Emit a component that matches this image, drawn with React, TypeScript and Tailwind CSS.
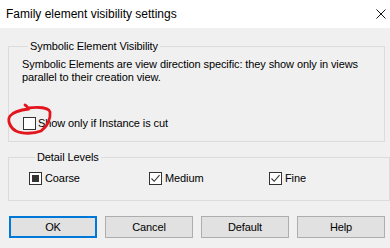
import React from 'react';

// Family element visibility settings dialog (Win10 style)

const font = { fontFamily: '"Liberation Sans", Arial, sans-serif' };

function CheckBox({ state }: { state: 'off' | 'on' | 'mixed' }) {
  return (
    <span className="flex h-[13px] w-[13px] shrink-0 items-center justify-center border border-[#333333] bg-white">
      {state === 'mixed' && <span className="h-[7px] w-[7px] bg-[#333333]" />}
      {state === 'on' && (
        <svg width="11" height="11" viewBox="0 0 11 11" fill="none">
          <path d="M1.5 5.5 L4.2 8.3 L9.5 2.2" stroke="#333333" strokeWidth="1.1" />
        </svg>
      )}
    </span>
  );
}

function Check({ label, state }: { label: string; state: 'off' | 'on' | 'mixed' }) {
  return (
    <label className="flex w-[120px] items-center gap-[3px] leading-[13px]">
      <CheckBox state={state} />
      <span>{label}</span>
    </label>
  );
}

function Button({ label, primary }: { label: string; primary?: boolean }) {
  return (
    <button
      className={`h-[22px] w-[88px] bg-[#e1e1e1] text-[11px] text-black ${
        primary ? 'border-2 border-[#0078d7]' : 'border border-[#adadad]'
      }`}
    >
      {label}
    </button>
  );
}

export default function App() {
  return (
    <div
      className="relative h-[248px] w-[390px] overflow-hidden bg-[#f0f0f0] text-[11px] tracking-[-0.1px] text-black"
      style={font}
    >
      {/* Title bar */}
      <div className="flex h-[28px] items-center justify-between bg-white pl-[6px] pr-[3px]">
        <span className="text-[12px] tracking-normal">Family element visibility settings</span>
        <svg width="12" height="12" viewBox="0 0 12 12">
          <path d="M1.5 1.5 L10.5 10.5 M10.5 1.5 L1.5 10.5" stroke="#111" strokeWidth="1" />
        </svg>
      </div>

      {/* Symbolic group */}
      <fieldset className="ml-[8px] mt-[12px] w-[377px] border border-[#dcdcdc] pb-[11px] pl-[13px]">
        <legend className="ml-[6px] px-[2px] leading-[13px]">Symbolic Element Visibility</legend>
        <p className="pt-[5px] leading-[13px]">
          Symbolic Elements are view direction specific: they show only in views
          <br />
          parallel to their creation view.
        </p>
        <div className="ml-[1px] mt-[33px]">
          <label className="flex items-center gap-[2px] leading-[13px]">
            <CheckBox state="off" />
            <span>Show only if Instance is cut</span>
          </label>
        </div>
      </fieldset>

      {/* Detail levels group */}
      <fieldset className="ml-[8px] mt-[9px] w-[377px] border border-[#dcdcdc] pb-[15px] pl-[20px]">
        <legend className="ml-[6px] px-[2px] leading-[13px]">Detail Levels</legend>
        <div className="flex pt-[8px]">
          <Check label="Coarse" state="mixed" />
          <Check label="Medium" state="on" />
          <Check label="Fine" state="on" />
        </div>
      </fieldset>

      {/* Buttons */}
      <div className="ml-[9px] mt-[15px] flex gap-[8px]">
        <Button label="OK" primary />
        <Button label="Cancel" />
        <Button label="Default" />
        <Button label="Help" />
      </div>

      {/* red hand-drawn annotation */}
      <svg className="pointer-events-none absolute left-0 top-0" width="390" height="248" fill="none">
        <path
          d="M25 105 C27 106 27 107 28 108 C37 107 49 107 50 112 C51 119 47 127 41 131 C34 134 22 134 16 131 C10 128 7 120 10 116 C13 112 20 110 29 109"
          stroke="#e3151d"
          strokeWidth="2.8"
          strokeLinecap="round"
        />
      </svg>
    </div>
  );
}
